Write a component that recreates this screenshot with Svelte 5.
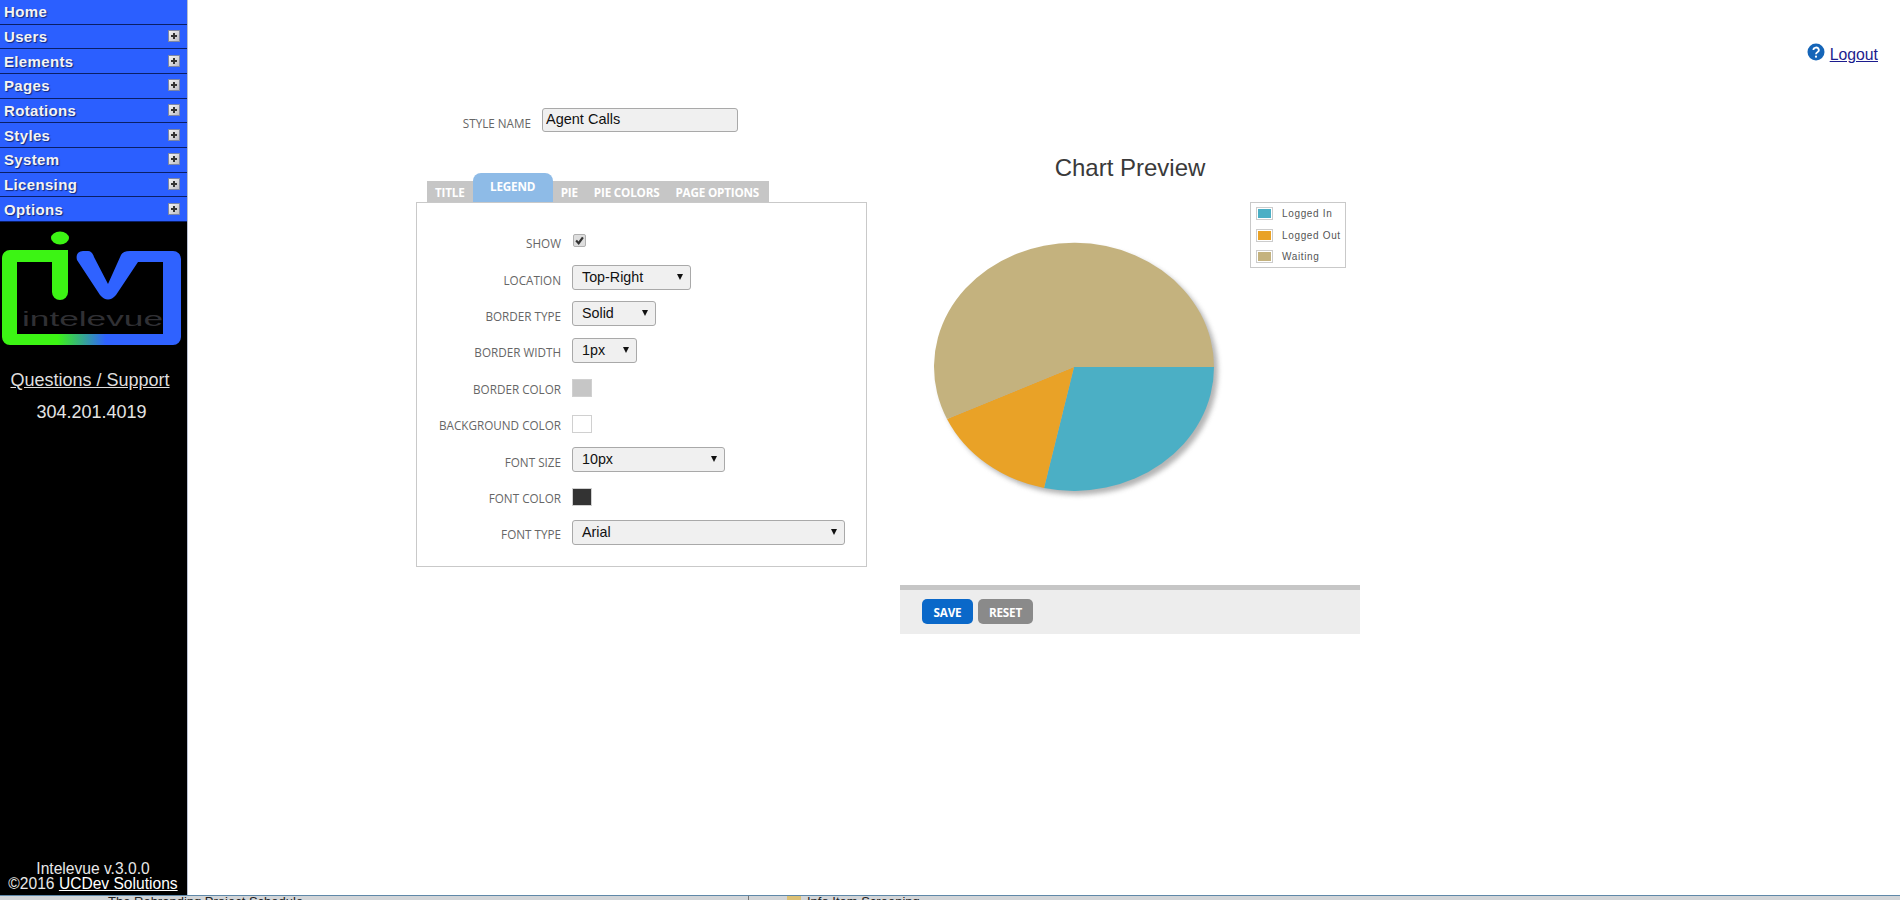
<script lang="ts">
	const menu = ['Home', 'Users', 'Elements', 'Pages', 'Rotations', 'Styles', 'System', 'Licensing', 'Options'];

	const legend = [
		{ label: 'Logged In', color: '#4bafc5' },
		{ label: 'Logged Out', color: '#e9a227' },
		{ label: 'Waiting', color: '#c4b27e' },
	];

	const tabs = ['Title', 'Legend', 'Pie', 'Pie Colors', 'Page Options'];
	let activeTab = $state('Legend');
</script>

<div class="page">
	<div class="body">
		<aside class="side">
			<nav class="menu">
				{#each menu as item, i}
					<div class="menu__item">
						<span>{item}</span>
						{#if i > 0}
							<span class="menu__plus" aria-hidden="true"></span>
						{/if}
					</div>
				{/each}
			</nav>

			<svg class="logo" width="187" height="126" viewBox="0 0 187 126" aria-label="Intelevue">
				<defs>
					<linearGradient id="logo-frame" x1="0" x2="1" y1="0" y2="0">
						<stop offset="0.31" stop-color="#3cf414" />
						<stop offset="0.58" stop-color="#2f62ff" />
					</linearGradient>
				</defs>
				<path
					d="M10 28H52V40H17V112H163V40H130V29H173a8 8 0 0 1 8 8V115a8 8 0 0 1-8 8H10a8 8 0 0 1-8-8V36a8 8 0 0 1 8-8Z"
					fill="url(#logo-frame)"
				/>
				<ellipse cx="60" cy="16" rx="9" ry="6.5" fill="#3cf414" />
				<path d="M52 28H68V70a8 8 0 0 1-16 0Z" fill="#3cf414" />
				<path
					d="M77 38Q75 30 83 29H88Q92 29 94 35L108 62L121 33Q123 29 130 29H140V40H138L116 73Q108 82 100 73Z"
					fill="#2f62ff"
				/>
				<text x="22" y="104" class="logo__word" textLength="141" lengthAdjust="spacingAndGlyphs">intelevue</text>
			</svg>

			<a class="side__support" href="#support">Questions / Support</a>
			<div class="side__phone">304.201.4019</div>

			<div class="side__foot">
				<div>Intelevue v.3.0.0</div>
				<div>©2016 <a href="#ucdev">UCDev Solutions</a></div>
			</div>
		</aside>

		<main class="main">
			<div class="topbar">
				<svg class="help" width="18" height="18" viewBox="0 0 18 18" aria-hidden="true">
					<circle cx="9" cy="9" r="8.5" fill="#1565b8" />
					<path d="M6.4 7a2.7 2.5 0 1 1 4 2.2c-1 .6-1.4 1-1.4 2" fill="none" stroke="#fff" stroke-width="1.8" />
					<circle cx="9" cy="13.7" r="1.1" fill="#fff" />
				</svg>
				<a class="logout" href="#logout">Logout</a>
			</div>

			<div class="cols">
				<section class="editor">
					<div class="name">
						<span class="label">Style Name</span>
						<input class="name__input" value="Agent Calls" />
					</div>

					<div class="tabs">
						{#each tabs as tab}
							<button class="tab" class:is-active={tab === activeTab} onclick={() => (activeTab = tab)}>{tab}</button>
						{/each}
					</div>

					<div class="panel">
						<div class="row row--check">
							<span class="label">Show</span>
							<span class="check" aria-hidden="true">
								<svg width="11" height="11" viewBox="0 0 13 13">
									<path d="M2.5 6.5l3 3.2 5-7" fill="none" stroke="#333" stroke-width="2.6" />
								</svg>
							</span>
						</div>
						<div class="row">
							<span class="label">Location</span>
							<span class="select select--location">Top-Right</span>
						</div>
						<div class="row">
							<span class="label">Border Type</span>
							<span class="select select--border">Solid</span>
						</div>
						<div class="row">
							<span class="label">Border Width</span>
							<span class="select select--width">1px</span>
						</div>
						<div class="row">
							<span class="label">Border Color</span>
							<span class="swatch swatch--border"></span>
						</div>
						<div class="row">
							<span class="label">Background Color</span>
							<span class="swatch swatch--bg"></span>
						</div>
						<div class="row">
							<span class="label">Font Size</span>
							<span class="select select--size">10px</span>
						</div>
						<div class="row">
							<span class="label">Font Color</span>
							<span class="swatch swatch--font"></span>
						</div>
						<div class="row">
							<span class="label">Font Type</span>
							<span class="select select--type">Arial</span>
						</div>
					</div>
				</section>

				<section class="preview">
					<h2 class="preview__title">Chart Preview</h2>
					<div class="chart">
						<svg width="300" height="280" viewBox="0 0 300 280" aria-label="Pie chart">
							<defs>
								<filter id="pie-shadow" x="-10%" y="-10%" width="120%" height="120%">
									<feGaussianBlur stdDeviation="2.5" />
								</filter>
							</defs>
							<ellipse cx="147" cy="129" rx="140" ry="124" fill="#777" opacity="0.55" filter="url(#pie-shadow)" />
							<path d="M143 125H283A140 124 0 0 1 113 246Z" fill="#4bafc5" />
							<path d="M143 125L113 246A140 124 0 0 1 16 177Z" fill="#e9a227" />
							<path d="M143 125L16 177A140 124 0 1 1 283 125Z" fill="#c4b27e" />
						</svg>
						<ul class="legend">
							{#each legend as entry}
								<li class="legend__row">
									<span class="legend__key"><span style="background: {entry.color}"></span></span>
									{entry.label}
								</li>
							{/each}
						</ul>
					</div>
					<div class="actions">
						<button class="btn btn--save">Save</button>
						<button class="btn btn--reset">Reset</button>
					</div>
				</section>
			</div>
		</main>
	</div>

	<div class="taskbar">
		<span class="taskbar__text taskbar__text--first">The Rebranding Project Schedule ...</span>
		<span class="taskbar__sep"></span>
		<span class="taskbar__folder"></span>
		<span class="taskbar__text">Info Item Screening</span>
	</div>
</div>

<style>
	:global(body) {
		margin: 0;
		background: #fff;
		overflow: hidden;
	}

	.page {
		display: flex;
		flex-direction: column;
		height: 900px;
		font-family: 'Liberation Sans', Arial, sans-serif;
	}

	.body {
		display: flex;
		flex: 0 0 895px;
		min-height: 0;
	}

	.side {
		flex: 0 0 187px;
		display: flex;
		flex-direction: column;
		background: #000;
		color: #e4e4e4;
		border-right: 1px solid #b9c0d0;
	}

	.menu {
		display: grid;
		grid-auto-rows: 24.67px;
	}
	.menu__item {
		display: flex;
		align-items: center;
		justify-content: space-between;
		padding: 0 7px 0 4px;
		box-sizing: border-box;
		background: #2b5fff;
		border-bottom: 1px solid #0a1f66;
		color: #f4f4f4;
		font-size: 15px;
		font-weight: 700;
		letter-spacing: 0.35px;
		text-shadow: 1px 1px 1px #12287a;
	}
	.menu__plus {
		position: relative;
		width: 12px;
		height: 12px;
		margin-top: -1px;
		background: linear-gradient(135deg, #f4f4f4, #bdbdc4);
		border: 1px solid #7d86a5;
		box-sizing: border-box;
	}
	.menu__plus::before,
	.menu__plus::after {
		content: '';
		position: absolute;
		background: #333;
	}
	.menu__plus::before {
		left: 2px;
		right: 2px;
		top: 4px;
		height: 2px;
	}
	.menu__plus::after {
		top: 2px;
		bottom: 2px;
		left: 4px;
		width: 2px;
	}

	.logo {
		display: block;
	}
	.logo__word {
		font-family: 'Liberation Sans', Arial, sans-serif;
		font-size: 21px;
		fill: #303034;
	}

	.side__support {
		margin-top: 22px;
		padding-right: 7px;
		text-align: center;
		font-size: 18px;
		color: #dedede;
	}
	.side__phone {
		margin-top: 11px;
		padding-right: 4px;
		text-align: center;
		font-size: 18px;
	}
	.side__foot {
		margin-top: auto;
		margin-bottom: 4px;
		padding-right: 1px;
		text-align: center;
		font-size: 15.6px;
		line-height: 14.5px;
		color: #e8e8e8;
	}
	.side__foot a {
		color: #fff;
	}

	.main {
		flex: 1;
		min-width: 0;
	}

	.topbar {
		display: flex;
		justify-content: flex-end;
		align-items: center;
		gap: 5px;
		height: 18px;
		padding: 46px 22px 0 0;
		margin-bottom: -1px;
	}
	.help {
		margin-top: -6px;
	}
	.logout {
		font-size: 15.8px;
		color: #1c1c8e;
	}

	.cols {
		display: flex;
		padding: 45px 0 0 228px;
	}

	.editor {
		flex: 0 0 453px;
	}

	.label {
		font-family: 'Open Sans', sans-serif;
		font-size: 11.7px;
		color: #666;
		text-transform: uppercase;
		text-align: right;
	}

	.name {
		display: flex;
		align-items: center;
		gap: 11px;
		padding-left: 39px;
	}
	.name .label {
		width: 76px;
		white-space: nowrap;
		direction: rtl;
		margin-top: 5px;
	}
	.name__input {
		width: 196px;
		height: 24px;
		box-sizing: border-box;
		padding: 0 3px 3px;
		background: #f0f0f0;
		border: 1px solid #a9a9a9;
		border-radius: 3px;
		font-family: 'Liberation Sans', Arial, sans-serif;
		font-size: 14.5px;
		color: #111;
	}

	.tabs {
		display: flex;
		align-items: flex-end;
		height: 29px;
		margin: 41px 0 0 11px;
	}
	.tab {
		height: 21px;
		padding: 1px 8px 0;
		border: 0;
		background: #c6c6c6;
		color: #fff;
		font-family: 'Open Sans', sans-serif;
		font-size: 11.7px;
		font-weight: 700;
		letter-spacing: -0.2px;
		text-transform: uppercase;
	}
	.tab:last-child {
		padding-right: 10px;
	}
	.tab.is-active {
		height: 29px;
		padding: 0 17.5px 3px;
		background: #8ebbe7;
		border-radius: 8px 8px 0 0;
	}

	.panel {
		width: 451px;
		height: 365px;
		box-sizing: border-box;
		padding: 20px 0 0;
		border: 1px solid #c9c9c9;
	}

	.row {
		display: grid;
		grid-template-columns: 144px auto;
		justify-content: start;
		align-items: center;
		column-gap: 11px;
		height: 36.4px;
	}
	.row .label {
		margin-top: 4px;
	}

	.check {
		display: flex;
		width: 13px;
		height: 13px;
		margin: -2px 0 0 1px;
		background: #dedede;
		border: 1px solid #b0b0b0;
		border-radius: 2px;
		box-sizing: border-box;
		align-items: center;
		justify-content: center;
	}
	.check svg {
		flex: none;
	}

	.select {
		position: relative;
		display: block;
		height: 25px;
		box-sizing: border-box;
		padding: 3px 0 0 9px;
		background: #f0f0f0;
		border: 1px solid #a9a9a9;
		border-radius: 3px;
		font-size: 14.3px;
		color: #111;
	}
	.select::after {
		content: '';
		position: absolute;
		right: 7px;
		top: 8px;
		border-top: 6px solid #111;
		border-left: 3px solid transparent;
		border-right: 3px solid transparent;
	}
	.select--location {
		width: 119px;
	}
	.select--border {
		width: 84px;
	}
	.select--width {
		width: 65px;
	}
	.select--size {
		width: 153px;
	}
	.select--type {
		width: 273px;
	}

	.swatch {
		display: block;
		width: 20px;
		height: 18px;
		margin-top: 2px;
		box-sizing: border-box;
		border: 1px solid #d0d0d0;
	}
	.swatch--border {
		background: #c6c6c6;
	}
	.swatch--bg {
		background: #fff;
	}
	.swatch--font {
		background: #333;
	}

	.preview {
		flex: 0 0 460px;
		margin-left: 31px;
	}
	.preview__title {
		margin: 47px 0 0;
		text-align: center;
		font-size: 24px;
		font-weight: 400;
		line-height: 26px;
		color: #3a3a3a;
	}
	.chart {
		position: relative;
		height: 314px;
		margin-top: 21px;
	}
	.chart svg {
		display: block;
		margin: 0 0 0 31px;
		position: relative;
		top: 40px;
	}
	.legend {
		position: absolute;
		top: 0;
		left: 350px;
		width: 96px;
		height: 66px;
		box-sizing: border-box;
		margin: 0;
		padding: 0 0 0 5px;
		list-style: none;
		background: #fff;
		border: 1px solid #c9c9c9;
		font-size: 10px;
		letter-spacing: 0.65px;
		color: #555;
	}
	.legend__row {
		display: flex;
		align-items: center;
		gap: 9px;
		height: 21.5px;
		white-space: nowrap;
	}
	.legend__key {
		display: block;
		width: 17px;
		height: 13px;
		padding: 1px;
		box-sizing: border-box;
		border: 1px solid #ccc;
		background: #fff;
	}
	.legend__key span {
		display: block;
		height: 100%;
	}

	.actions {
		display: flex;
		gap: 5px;
		height: 49px;
		box-sizing: border-box;
		padding: 9px 0 0 22px;
		margin-top: 69px;
		background: #ededed;
		border-top: 5px solid #c6c6c6;
	}
	.btn {
		height: 25px;
		padding: 0;
		border: 0;
		border-radius: 5px;
		color: #fff;
		font-family: 'Open Sans', sans-serif;
		font-size: 11.7px;
		font-weight: 700;
		letter-spacing: -0.2px;
		text-transform: uppercase;
	}
	.btn--save {
		width: 51px;
		background: #0a68c9;
	}
	.btn--reset {
		width: 55px;
		background: #8a8a8a;
	}

	.taskbar {
		flex: 0 0 5px;
		display: flex;
		align-items: flex-start;
		overflow: hidden;
		box-sizing: border-box;
		background: #d2d5d8;
		border-top: 1px solid #5f88a8;
		font-size: 13px;
		line-height: 13px;
		color: #222;
	}
	.taskbar__text {
		white-space: nowrap;
		margin-top: -1px;
	}
	.taskbar__text--first {
		margin-left: 108px;
		width: 640px;
	}
	.taskbar__sep {
		width: 1px;
		height: 4px;
		background: #777;
	}
	.taskbar__folder {
		width: 14px;
		height: 4px;
		margin: 0 6px 0 38px;
		background: #dcc074;
	}
</style>
